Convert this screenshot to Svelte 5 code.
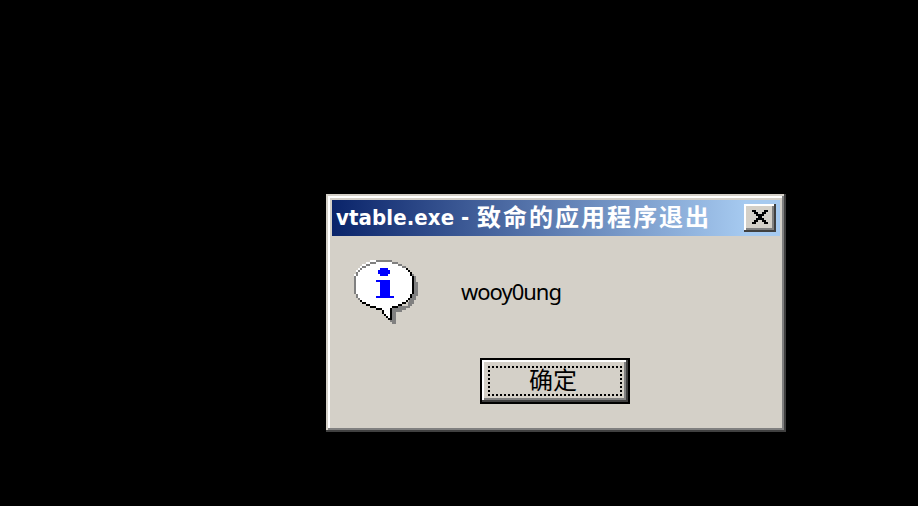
<script>
  const title = 'vtable.exe';
  const titleCjk = '致命的应用程序退出';
</script>

<main>
  <section class="dialog">
    <header>
      <h1><span class="latin">{title}</span><span class="dash">-</span><span class="cjk">{titleCjk}</span></h1>
      <button class="close" aria-label="关闭">
        <svg width="16" height="14" viewBox="0 0 8 7" shape-rendering="crispEdges">
          <path d="M0 0h2v1h-2zM6 0h2v1h-2zM1 1h2v1h-2zM5 1h2v1h-2zM2 2h4v1h-4zM3 3h2v1h-2zM2 4h4v1h-4zM1 5h2v1h-2zM5 5h2v1h-2zM0 6h2v1h-2zM6 6h2v1h-2z" />
        </svg>
      </button>
    </header>
    <div class="body">
      <svg class="info" width="64" height="64" viewBox="0 0 32 32" shape-rendering="crispEdges">
        <path fill="#808080" d="M29 7h1v1h1v3h1v7h-1v2h-1v2h-1v1h-1v1h-2v1h-2v1h-3v6h-2v-1h-1v-7h1v-1h8z" />
        <path fill="#fff" d="M11 0h8v1h3v1h2v1h2v1h1v1h1v1h1v2h1v9h-1v2h-1v1h-1v1h-1v1h-2v1h-2v1h-3v6h-1v-1h-1v-1h-1v-1h-1v-2h-1v-1h-3v-1h-3v-1h-2v-1h-2v-1h-1v-1h-1v-1h-1v-2h-1v-9h1v-2h1v-1h1v-1h1v-1h2v-1h2v-1h3z" />
        <path fill="#808080" d="M11 0h8v1h-8zM8 1h3v1h-3zM19 1h3v1h-3zM6 2h2v1h-2zM22 2h2v1h-2zM4 3h2v1h-2zM24 3h2v1h-2zM3 4h1v1h-1zM2 5h1v1h-1zM1 6h1v2h-1zM0 8h1v9h-1zM1 17h1v2h-1zM2 19h1v1h-1z" />
        <path fill="#000" d="M26 4h1v1h-1zM27 5h1v1h-1zM28 6h1v2h-1zM29 8h1v9h-1zM28 17h1v2h-1zM27 19h1v1h-1zM26 20h1v1h-1zM24 21h2v1h-2zM22 22h2v1h-2zM19 23h3v1h-3zM18 24h1v6h-1zM3 20h1v1h-1zM4 21h2v1h-2zM6 22h2v1h-2zM8 23h3v1h-3zM11 24h3v1h-3zM14 25h1v2h-1zM15 27h1v1h-1zM16 28h1v1h-1zM17 29h1v1h-1z" />
        <path fill="#00f" d="M13 4h4v1h1v2h-1v1h-4v-1h-1v-2h1zM11 10h7v8h2v1h-9v-1h2v-7h-2z" />
      </svg>
      <p>wooy0ung</p>
    </div>
    <button class="ok"><span>确定</span></button>
  </section>
</main>

<style>
  :global(body) { margin: 0; background: #000; }
  main { box-sizing: border-box; width: 918px; height: 506px; padding: 194px 0 0 326px; background: #000; overflow: hidden; }
  .dialog { box-sizing: border-box; width: 460px; height: 238px; background: #d4d0c8; padding: 6px; display: flex; flex-direction: column;
    box-shadow: inset -2px -2px #404040, inset 2px 2px #d4d0c8, inset -4px -4px #808080, inset 4px 4px #fff; }
  header { box-sizing: border-box; height: 36px; display: flex; align-items: center; justify-content: space-between; padding: 0 4px; background: linear-gradient(90deg, #0a246a, #a6caf0 414px); }
  h1 { margin: 0; color: #fff; display: flex; align-items: center; height: 36px; white-space: pre; }
  .latin { font: bold 22px/36px "DejaVu Sans Condensed", "DejaVu Sans", sans-serif; width: 125px; letter-spacing: 0.1px; }
  .dash { font: bold 22px/36px "DejaVu Sans Condensed", "DejaVu Sans", sans-serif; width: 16px; }
  .cjk { font: bold 24px/32px "Noto Sans CJK SC", sans-serif; letter-spacing: 2px; height: 36px; }
  button { border: 0; padding: 0; background: #d4d0c8; color: #000; box-sizing: border-box; }
  .close { width: 32px; height: 28px; display: flex; padding: 6px 0 0 8px; box-shadow: inset -2px -2px #404040, inset 2px 2px #fff, inset -4px -4px #808080; }
  .body { display: flex; height: 122px; padding: 24px 0 0 22px; box-sizing: border-box; }
  p { margin: 15px 0 0 43px; height: 32px; font: 22px/32px "Noto Sans", sans-serif; letter-spacing: -1px; color: #000; }
  .ok { width: 150px; height: 46px; margin-left: 148px; border: 2px solid #000; padding: 6px; box-shadow: inset -2px -2px #404040, inset 2px 2px #fff, inset -4px -4px #808080; }
  .ok span { display: block; box-sizing: border-box; height: 30px; border: 2px dotted #000; padding-right: 4px; font: 24px/21px "Noto Sans CJK SC", sans-serif; }
</style>
